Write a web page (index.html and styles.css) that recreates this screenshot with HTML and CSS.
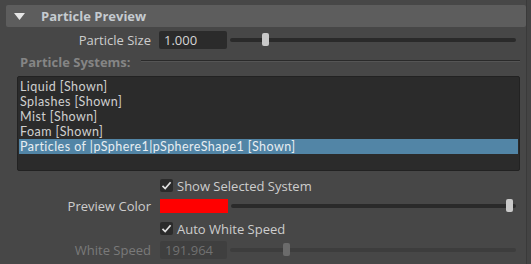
FILE: index.html
```html
<!DOCTYPE html>
<html lang="en">
<head>
    <meta charset="UTF-8">
    <title>Particle Preview</title>
    <link rel="stylesheet" href="styles.css">
</head>
<body>
    <div class="panel">
        <div class="header">
            <svg class="arrow" width="11" height="7" viewBox="0 0 11 7"><path d="M0 0 H11 L5.5 7 Z" fill="#e6e6e6"/></svg>
            <span class="title">Particle Preview</span>
        </div>

        <div class="row row-size">
            <label class="label">Particle Size</label>
            <div class="field">1.000</div>
            <div class="slider">
                <div class="track"></div>
                <div class="handle" style="left: 32px"></div>
            </div>
        </div>

        <div class="section">
            <span class="section-title">Particle Systems:</span>
            <span class="rule"></span>
        </div>

        <div class="list">
            <div class="item">Liquid [Shown]</div>
            <div class="item">Splashes [Shown]</div>
            <div class="item">Mist [Shown]</div>
            <div class="item">Foam [Shown]</div>
            <div class="item selected">Particles of |pSphere1|pSphereShape1 [Shown]</div>
        </div>

        <div class="row row-check">
            <span class="label"></span>
            <span class="checkbox"><svg width="13" height="13" viewBox="0 0 13 13"><path d="M2.5 6.8 L5.2 9.6 L10.6 3.2" fill="none" stroke="#e0e0e0" stroke-width="1.7"/></svg></span>
            <span class="check-text">Show Selected System</span>
        </div>

        <div class="row row-color">
            <label class="label">Preview Color</label>
            <div class="swatch"></div>
            <div class="slider">
                <div class="track"></div>
                <div class="handle" style="left: 275px"></div>
            </div>
        </div>

        <div class="row row-check2">
            <span class="label"></span>
            <span class="checkbox"><svg width="13" height="13" viewBox="0 0 13 13"><path d="M2.5 6.8 L5.2 9.6 L10.6 3.2" fill="none" stroke="#e0e0e0" stroke-width="1.7"/></svg></span>
            <span class="check-text">Auto White Speed</span>
        </div>

        <div class="row row-speed disabled">
            <label class="label">White Speed</label>
            <div class="field">191.964</div>
            <div class="slider">
                <div class="track"></div>
                <div class="handle" style="left: 53px"></div>
            </div>
        </div>
    </div>
</body>
</html>
```

FILE: styles.css
```css
html, body {
    margin: 0;
    padding: 0;
}
body {
    width: 531px;
    height: 264px;
    overflow: hidden;
    background-color: #444444;
    font-family: "Open Sans", "Noto Sans", sans-serif;
    font-size: 12px;
    color: #cfcfcf;
}
.panel {
    height: 264px;
    margin-right: 4px;
    border-right: 1px solid #3a3a3a;
    background-color: #474747;
    padding-top: 5px;
    box-sizing: border-box;
}
.header {
    display: flex;
    align-items: center;
    height: 22px;
    margin: 0 0 0 6px;
    background-color: #5d5d5d;
    border-radius: 2px;
}
.arrow {
    margin-left: 8px;
}
.title {
    margin-left: 16px;
    font-weight: bold;
    font-size: 13px;
    color: #c5cbd0;
}
.row {
    display: flex;
    align-items: center;
    padding-right: 10px;
}
.label {
    width: 151px;
    flex: none;
    text-align: right;
    margin-right: 8px;
    font-size: 13px;
    color: #cdcdcd;
}
.field {
    width: 63px;
    height: 18px;
    line-height: 18px;
    padding-left: 5px;
    background-color: #2b2b2b;
    border-radius: 2px;
    font-size: 13px;
    color: #d6d6d6;
    flex: none;
}
.slider {
    position: relative;
    flex: 1;
    height: 14px;
    margin-left: 3px;
}
.track {
    position: absolute;
    left: 0;
    right: 0;
    top: 5px;
    height: 4px;
    border-radius: 2px;
    background-color: #2a2a2a;
}
.handle {
    position: absolute;
    top: 0;
    width: 7px;
    height: 13px;
    border-radius: 2px;
    background-color: #c9c9c9;
}
.row-size {
    margin-top: 4px;
    height: 18px;
}
.section {
    display: flex;
    align-items: center;
    margin: 4px 0 0 20px;
    height: 18px;
}
.section-title {
    font-weight: bold;
    font-size: 13px;
    color: #858585;
}
.rule {
    width: 379px;
    height: 1px;
    margin-left: 10px;
    margin-top: -2px;
    background-color: #2a2a2a;
    border-bottom: 1px solid #555555;
}
.list {
    margin: 5px 0 0 17px;
    width: 499px;
    height: 91px;
    padding: 2px 1px 0 1px;
    background-color: #2b2b2b;
    border: 1px solid #222222;
    border-radius: 2px;
    box-sizing: content-box;
}
.item {
    height: 15px;
    line-height: 15px;
    padding-left: 1px;
    font-family: Lato, "Open Sans", sans-serif;
    font-size: 12.5px;
    letter-spacing: 0.45px;
    color: #d0d0d0;
    white-space: nowrap;
    overflow: hidden;
}
.item.selected {
    background-color: #5285a6;
    color: #e8eef2;
}
.checkbox {
    width: 13px;
    height: 13px;
    margin-left: 1px;
    background-color: #2b2b2b;
    border-radius: 2px;
    flex: none;
    display: flex;
}
.check-text {
    margin-left: 4px;
    font-size: 13px;
    color: #cdcdcd;
}
.row-check {
    margin-top: 8px;
    height: 13px;
}
.row-color {
    margin-top: 7px;
    height: 14px;
}
.swatch {
    width: 68px;
    height: 14px;
    margin-left: 1px;
    background-color: #ff0000;
    flex: none;
}
.row-check2 {
    margin-top: 9px;
    height: 13px;
}
.row-speed {
    margin-top: 6px;
    height: 18px;
}
.row-speed .field {
    margin-left: 1px;
    width: 62px;
}
.disabled .label {
    color: #7a7a7a;
}
.disabled .field {
    background-color: #3f3f3f;
    color: #717171;
}
.disabled .track {
    background-color: #3d3d3d;
}
.disabled .handle {
    background-color: #6b6b6b;
}
```
